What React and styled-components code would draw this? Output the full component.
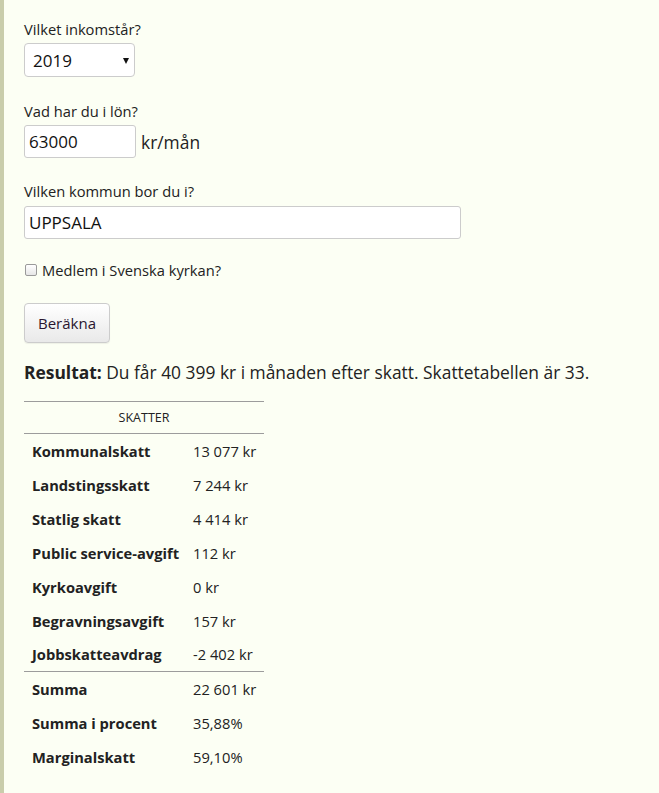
import React, { useState } from "react"
import styled, { createGlobalStyle } from "styled-components"

const GlobalStyle = createGlobalStyle`
  html, body {
    margin: 0;
    padding: 0;
    background: #fcfff4;
  }
  body {
    font-family: "Open Sans", "Noto Sans", sans-serif;
    color: #222;
    font-size: 14.7px;
  }
`

const Page = styled.div`
  min-height: 793px;
  box-sizing: border-box;
  border-left: 4px solid #c9cdab;
  padding: 19px 20px 20px 20px;
`

const FormGroup = styled.div`
  margin-bottom: ${p => p.$gap || 23}px;
`

const Label = styled.label`
  display: block;
  font-size: 14.7px;
  line-height: 20px;
  margin-bottom: ${p => p.$space || 4}px;
`

const SelectWrap = styled.div`
  position: relative;
  width: 111px;
  &::after {
    content: "";
    position: absolute;
    right: 6px;
    top: 15px;
    border-left: 3.5px solid transparent;
    border-right: 3.5px solid transparent;
    border-top: 6px solid #111;
    pointer-events: none;
  }
`

const Select = styled.select`
  appearance: none;
  width: 111px;
  height: 34px;
  box-sizing: border-box;
  border: 1px solid #ccc;
  border-radius: 4px;
  background: #fff;
  padding: 0 8px;
  font-family: inherit;
  font-size: 17px;
  color: #111;
`

const InputRow = styled.div`
  display: flex;
  align-items: center;
  gap: 5px;
`

const TextInput = styled.input`
  width: ${p => p.$width}px;
  height: 33px;
  box-sizing: border-box;
  border: 1px solid #ccc;
  border-radius: 3px;
  background: #fff;
  padding: 0 4px;
  font-family: inherit;
  font-size: 17px;
  color: #111;
  outline: none;
`

const Unit = styled.span`
  font-size: 17.4px;
  color: #222;
`

const CheckLabel = styled.label`
  display: flex;
  align-items: center;
  gap: 5px;
  font-size: 14.7px;
  line-height: 20px;
`

const Check = styled.input`
  appearance: none;
  width: 12px;
  height: 12px;
  margin: 0 0 0 1px;
  border: 1px solid #9a9a9a;
  border-radius: 2px;
  background: linear-gradient(#fff, #e6e6e6);
  box-sizing: border-box;
`

const Button = styled.button`
  height: 40px;
  padding: 0 13px;
  border: 1px solid #ccc;
  border-radius: 4px;
  background: linear-gradient(#fff, #e9e9e9);
  font-family: inherit;
  font-size: 15px;
  color: #2a1630;
  box-shadow: 0 1px 1px rgba(0, 0, 0, 0.06);
`

const Result = styled.p`
  margin: 0 0 18px 0;
  font-size: 17.4px;
  line-height: 22px;
  strong {
    font-weight: 700;
  }
`

const Table = styled.table`
  width: 240px;
  border-collapse: collapse;
  table-layout: fixed;
  font-size: 14.7px;
`

const HeadCell = styled.th`
  height: 29px;
  border-top: 1px solid #9c9c9c;
  border-bottom: 1px solid #9c9c9c;
  font-size: 12.5px;
  font-weight: 400;
  text-transform: uppercase;
  text-align: center;
`

const Row = styled.tr`
  height: 34px;
  border-top: ${p => (p.$divider ? "1px solid #9c9c9c" : "none")};
`

const NameCell = styled.td`
  padding: 0 8px;
  font-weight: 700;
  white-space: nowrap;
`

const ValueCell = styled.td`
  padding: 0 8px;
  white-space: nowrap;
`

const taxes = [
  ["Kommunalskatt", "13 077 kr"],
  ["Landstingsskatt", "7 244 kr"],
  ["Statlig skatt", "4 414 kr"],
  ["Public service-avgift", "112 kr"],
  ["Kyrkoavgift", "0 kr"],
  ["Begravningsavgift", "157 kr"],
  ["Jobbskatteavdrag", "-2 402 kr"],
]

const totals = [
  ["Summa", "22 601 kr"],
  ["Summa i procent", "35,88%"],
  ["Marginalskatt", "59,10%"],
]

const App = () => {
  const [year, setYear] = useState("2019")
  const [salary, setSalary] = useState("63000")
  const [town, setTown] = useState("UPPSALA")
  const [member, setMember] = useState(false)

  return (
    <Page>
      <GlobalStyle />
      <FormGroup $gap={24}>
        <Label htmlFor="year" $space={4}>Vilket inkomstår?</Label>
        <SelectWrap>
          <Select id="year" value={year} onChange={e => setYear(e.target.value)}>
            <option>2019</option>
            <option>2018</option>
            <option>2017</option>
          </Select>
        </SelectWrap>
      </FormGroup>

      <FormGroup>
        <Label htmlFor="salary">Vad har du i lön?</Label>
        <InputRow>
          <TextInput
            id="salary"
            $width={112}
            value={salary}
            onChange={e => setSalary(e.target.value)}
          />
          <Unit>kr/mån</Unit>
        </InputRow>
      </FormGroup>

      <FormGroup $gap={21}>
        <Label htmlFor="town" $space={5}>Vilken kommun bor du i?</Label>
        <TextInput
          id="town"
          $width={437}
          value={town}
          onChange={e => setTown(e.target.value)}
        />
      </FormGroup>

      <FormGroup>
        <CheckLabel>
          <Check
            type="checkbox"
            checked={member}
            onChange={e => setMember(e.target.checked)}
          />
          Medlem i Svenska kyrkan?
        </CheckLabel>
      </FormGroup>

      <FormGroup $gap={18}>
        <Button type="button">Beräkna</Button>
      </FormGroup>

      <Result>
        <strong>Resultat:</strong> Du får 40 399 kr i månaden efter skatt.
        Skattetabellen är 33.
      </Result>

      <Table>
        <colgroup>
          <col style={{ width: 161 }} />
          <col style={{ width: 79 }} />
        </colgroup>
        <thead>
          <tr>
            <HeadCell colSpan={2}>Skatter</HeadCell>
          </tr>
        </thead>
        <tbody>
          {taxes.map(([name, value]) => (
            <Row key={name}>
              <NameCell>{name}</NameCell>
              <ValueCell>{value}</ValueCell>
            </Row>
          ))}
          {totals.map(([name, value], i) => (
            <Row key={name} $divider={i === 0}>
              <NameCell>{name}</NameCell>
              <ValueCell>{value}</ValueCell>
            </Row>
          ))}
        </tbody>
      </Table>
    </Page>
  )
}

export default App
